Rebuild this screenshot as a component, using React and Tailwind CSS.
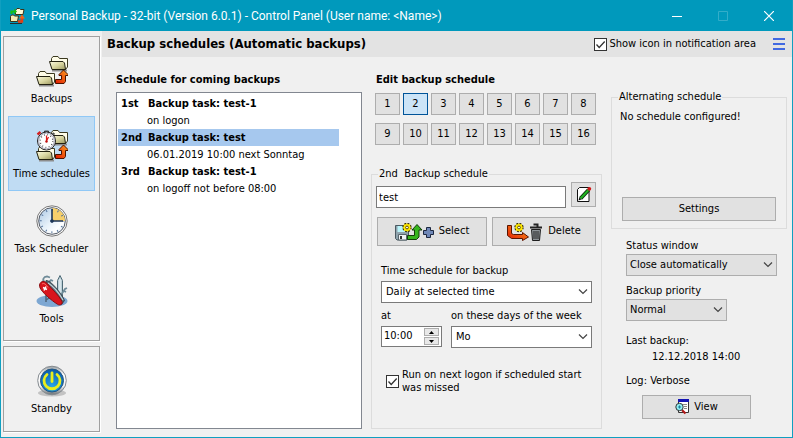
import React from 'react'
import clsx from 'clsx'

const SLOTS = [1, 2, 3, 4, 5, 6, 7, 8, 9, 10, 11, 12, 13, 14, 15, 16]

const SCHEDULES = [
  { nr: '1st', task: 'Backup task: test-1', when: 'on logon' },
  { nr: '2nd', task: 'Backup task: test', when: '06.01.2019 10:00 next Sonntag' },
  { nr: '3rd', task: 'Backup task: test-1', when: 'on logoff not before 08:00' },
]

function Defs() {
  return (
    <svg width="0" height="0" className="absolute" aria-hidden="true">
      <defs>
        <linearGradient id="flap" x1="0" y1="0" x2="1" y2="1">
          <stop offset="0" stopColor="#fbfae0" />
          <stop offset="0.5" stopColor="#d9d6a0" />
          <stop offset="1" stopColor="#9c9860" />
        </linearGradient>
        <linearGradient id="fire" x1="0" y1="1" x2="1" y2="0">
          <stop offset="0" stopColor="#e01800" />
          <stop offset="1" stopColor="#ffa020" />
        </linearGradient>
        <linearGradient id="face" x1="0" y1="0" x2="1" y2="1">
          <stop offset="0" stopColor="#a9c6e3" />
          <stop offset="0.5" stopColor="#e8f2fa" />
          <stop offset="0.75" stopColor="#ffffff" />
          <stop offset="1" stopColor="#bcd3e8" />
        </linearGradient>
        <radialGradient id="power" cx="0.5" cy="0.75" r="0.7">
          <stop offset="0" stopColor="#29a5e8" />
          <stop offset="1" stopColor="#0a5fae" />
        </radialGradient>
        <linearGradient id="rim" x1="0" y1="0" x2="0" y2="1">
          <stop offset="0" stopColor="#9aa0a4" />
          <stop offset="0.3" stopColor="#ffffff" />
          <stop offset="0.7" stopColor="#f2f2f2" />
          <stop offset="1" stopColor="#6a6e72" />
        </linearGradient>
      </defs>
    </svg>
  )
}

function Folder({ x, y }) {
  return (
    <g transform={`translate(${x} ${y})`} strokeWidth="1" strokeLinejoin="round">
      <path d="M3 14.500h15" stroke="#8d8d8d" strokeWidth="2" />
      <path d="M2.500 7V2.500L4 .5h5l1.500 2H18.500V11l-2 2.500z" fill="#fffde8" stroke="#3c3a20" />
      <path d="M.5 5.500h13.500l1.500 1.500 1 6.500H3z" fill="url(#flap)" stroke="#222010" />
    </g>
  )
}

function FireArrow() {
  return <path d="M19.500 24.500h6V20.500h-2.500v-1l4.500-4.500 4.500 4.500v1h-2.500v6l-1.500 2h-8.500z" fill="url(#fire)" stroke="#4a1200" />
}

function BackupsIcon() {
  return (
    <svg width="32" height="32" viewBox="0 0 32 32">
      <Folder x={13} y={1} />
      <Folder x={0} y={16} />
      <FireArrow />
    </svg>
  )
}

function StopwatchIcon() {
  return (
    <svg width="32" height="32" viewBox="0 0 32 32">
      <Folder x={13} y={0} />
      <Folder x={0} y={16} />
      <FireArrow />
      <path d="M8.500 1h4v2h-4z" fill="#777" stroke="#222" strokeWidth="0.800" />
      <path d="M1.500 4.500l3-2.500" stroke="#d42020" strokeWidth="2.400" />
      <path d="M16.500 3l2 1.500" stroke="#555" strokeWidth="2" />
      <circle cx="10.500" cy="11" r="9" fill="#fff" stroke="#222" />
      <circle cx="10.500" cy="11" r="7.800" fill="none" stroke="#aab" strokeWidth="1" />
      <circle cx="10.500" cy="11" r="6.300" fill="none" stroke="#333" strokeWidth="1.200" strokeDasharray="0.800 2.500" />
      <path d="M10.500 12V5.500M10.500 11l2-4" stroke="#e01818" strokeWidth="1.200" />
      <circle cx="10.500" cy="11.500" r="1.200" fill="#c01010" />
    </svg>
  )
}

function ClockIcon() {
  return (
    <svg width="32" height="32" viewBox="0 0 32 32">
      <circle cx="16" cy="16" r="15.200" fill="#fafafa" stroke="#777" />
      <circle cx="16" cy="16" r="13.300" fill="url(#face)" stroke="#555b66" />
      <path d="M16 16V3a13 13 0 0 1 13 13z" fill="#f6cf6b" />
      <circle cx="16" cy="16" r="11.300" fill="none" stroke="#52719a" strokeWidth="2" strokeDasharray="1 4.917" strokeDashoffset="0.500" />
      <path d="M16 17.500V4M14.500 16H27" stroke="#1c3557" strokeWidth="1.600" />
      <circle cx="16" cy="16" r="1.800" fill="#1c3557" />
    </svg>
  )
}

function KnifeIcon() {
  return (
    <svg width="32" height="32" viewBox="0 0 32 32">
      <ellipse cx="16" cy="26" rx="15.500" ry="6" fill="#7da7d2" />
      <path d="M10 20v7M13 23l-3 2" stroke="#4c6478" strokeWidth="1.500" />
      <path d="M21.500 22V5.500L24 .5l2.500 5V23z" fill="#bcd0d8" stroke="#4e6a76" />
      <path d="M24 4v16" stroke="#f4fafc" />
      <path d="M25 20l4-6 2-1M28 16l2 1" fill="none" stroke="#6f8b98" strokeWidth="1.800" />
      <path d="M8.500 7C6 5 7.500 1.500 11 1.500l3 1M12 8l3-3 2 1" fill="none" stroke="#6f8b98" strokeWidth="1.800" />
      <path d="M10 5.500c4-1 15 12 18.500 20l-3 4L9 13z" fill="#546a74" stroke="#2c3b42" strokeWidth="0.800" />
      <path d="M12 8c5 3 11 10 15 17" fill="none" stroke="#c4d4da" strokeWidth="1.200" />
      <path d="M4 8.500C6 5 10 6.500 12.500 10c4 4.500 10.500 10.500 13.500 16.500 1 2.500-2 4.500-4.500 2.800C15 25 8 19 5 14.500 3.700 12.500 3 10.500 4 8.500z" fill="#d8141c" stroke="#8b0c10" />
      <path d="M6 9c2-1.500 4 .5 6 3.500" fill="none" stroke="#ff7a70" />
      <path d="M7 12.500l4 2M10 11.500l-2 4" stroke="#fff" strokeWidth="1.500" />
    </svg>
  )
}

function PowerIcon() {
  return (
    <svg width="32" height="32" viewBox="0 0 32 32">
      <ellipse cx="16" cy="28" rx="14" ry="3.500" fill="#c3c3c3" />
      <circle cx="16" cy="15.500" r="14.300" fill="url(#rim)" stroke="#858b90" />
      <circle cx="16" cy="15.500" r="11.500" fill="url(#power)" stroke="#24567f" />
      <path d="M11 9.500a8 8 0 1 0 10 0" fill="none" stroke="#e9ee1c" strokeWidth="2.800" strokeLinecap="round" />
      <path d="M16 8v8.500" stroke="#e9ee1c" strokeWidth="2.800" strokeLinecap="round" />
    </svg>
  )
}

function AppIcon() {
  return (
    <svg width="16" height="16" viewBox="0 0 16 16">
      <path d="M6.500 6.500v-4l1.500-2h2.500l1 1h3.500l-1 5z" fill="#fffbd6" stroke="#3a3418" />
      <path d="M1.500 13.500V8.500l1-1.500h2l1 1H9.500l-1 5.500z" fill="#f3ecb4" stroke="#3a3418" />
      <path d="M2.500 6V3.500h3" fill="none" stroke="#16c016" strokeWidth="2.200" />
      <path d="M5 .5l3 3L5 6.500z" fill="#16c016" />
      <path d="M9 13.500h4V10" fill="none" stroke="#e83c10" strokeWidth="2.400" />
      <path d="M10 10.500l3-4 3 4z" fill="#f06418" />
      <path d="M1 15.500h12" stroke="#2b2b2b" />
    </svg>
  )
}

function Gear({ x, y }) {
  return (
    <g transform={`translate(${x} ${y})`}>
      <circle r="3.900" fill="#ffe800" stroke="#302800" strokeWidth="1.600" strokeDasharray="1.800 1.263" />
      <circle r="3.600" fill="#ffe800" />
      <circle r="1.400" fill="#fff" stroke="#5a4c00" strokeWidth="1" />
    </g>
  )
}

function SelectTaskIcon() {
  return (
    <svg width="40" height="18" viewBox="0 0 40 18">
      <path d="M.5 2.500h13v13l-1.500 1.500H2L.5 15.500z" fill="#8fa3ad" stroke="#4b5a62" />
      <path d="M2.500 3h9v6h-9z" fill="#b9f4fa" />
      <path d="M3.500 11.500h8V17h-8z" fill="#eef2f4" stroke="#59666d" />
      <path d="M5 13h2v3H5z" fill="#333" />
      <path d="M12.500 12.500h7V7H17l5-5.500L27 7h-3v7l-2.500 2.500h-9z" fill="#35b51c" stroke="#123c08" />
      <Gear x={12} y={4.5} />
      <path d="M31.500 4.500h4v3h3v4h-3v3h-4v-3h-3v-4h3z" fill="#7088b8" stroke="#1c2740" />
    </svg>
  )
}

function DeleteTaskIcon() {
  return (
    <svg width="36" height="18" viewBox="0 0 36 18">
      <path d="M.5 2.500h4v8l2 1h9V9.500l6 4.500-6 3.500v-2H4.500l-4-3z" fill="url(#fire)" stroke="#5a1400" />
      <Gear x={12} y={4.5} />
      <path d="M26.500 1.500h4v2M23 4.500h12" fill="none" stroke="#222" strokeWidth="2" />
      <path d="M24.500 6.500h9l-1 11h-7z" fill="#8e9499" stroke="#1e1e1e" />
      <path d="M27 8v8M29 8v8M31 8v8" stroke="#222" />
    </svg>
  )
}

function EditIcon() {
  return (
    <svg width="16" height="17" viewBox="0 0 16 17">
      <path d="M1.500 3.500l2-2h9.500v14H1.500z" fill="#fff" stroke="#111" />
      <path d="M4.500 12.500L12.500 4" stroke="#0b2f0b" strokeWidth="4" />
      <path d="M4.500 12.500L12.500 4" stroke="#22b422" strokeWidth="2" />
      <path d="M2.500 14.500l.8-3 2 2z" fill="#111" />
      <circle cx="13.300" cy="2.800" r="1.900" fill="#d01818" />
    </svg>
  )
}

function ViewIcon() {
  return (
    <svg width="15" height="16" viewBox="0 0 15 16">
      <path d="M3.500.5h10v13h-10z" fill="#fff" stroke="#333" />
      <path d="M3 0h11v3H3z" fill="#1414b4" />
      <path d="M8 5.500h4M9 7.500h3M9 9.500h3" stroke="#888" />
      <path d="M7 11l3.500 3.500" stroke="#b01818" strokeWidth="2.200" />
      <circle cx="4.500" cy="8" r="3.700" fill="#8ff0f4" stroke="#333" />
      <path d="M3 8h3M4.500 6.500v3" stroke="#1a7a9a" />
    </svg>
  )
}

function Chevron() {
  return (
    <svg width="10" height="6" viewBox="0 0 10 6" className="pointer-events-none absolute right-1 top-1/2 -translate-y-1/2">
      <path d="M1 .5l4 4 4-4" fill="none" stroke="#444" strokeWidth="1.200" />
    </svg>
  )
}

function Dropdown({ id, options, className, grey }) {
  return (
    <div className={clsx('relative', className)}>
      <select
        id={id}
        className={clsx(
          'block h-[22px] w-full appearance-none rounded-none border outline-none',
          grey ? 'border-[#adadad] bg-[#e1e1e1] pl-[3px]' : 'border-[#7a7a7a] bg-white pl-1'
        )}
      >
        {options.map((o) => (
          <option key={o}>{o}</option>
        ))}
      </select>
      <Chevron />
    </div>
  )
}

function Checkbox({ id }) {
  return (
    <span className="relative block size-[13px] shrink-0">
      <input id={id} type="checkbox" defaultChecked className="block size-[13px] appearance-none border border-[#333] bg-white" />
      <svg width="13" height="13" viewBox="0 0 13 13" className="pointer-events-none absolute inset-0">
        <path d="M2.500 6.500l2.700 3 5.500-6" fill="none" stroke="#333" strokeWidth="1.300" />
      </svg>
    </span>
  )
}

function PushButton({ className, children, ...rest }) {
  return (
    <button type="button" className={clsx('flex items-center justify-center border border-[#adadad] bg-[#e1e1e1]', className)} {...rest}>
      {children}
    </button>
  )
}

function NavButton({ icon, label, active, className }) {
  return (
    <button
      type="button"
      className={clsx(
        'flex w-full flex-col items-center border pt-[13px] whitespace-nowrap',
        active ? 'border-[#90c8f6] bg-[#c0dcf3]' : 'border-transparent',
        className
      )}
    >
      {icon}
      <span className="mt-1 leading-4">{label}</span>
    </button>
  )
}

function TitleBar() {
  return (
    <header className="flex h-[31px] items-center bg-[#0099bc] pl-2 text-white">
      <AppIcon />
      <h1 className="ml-[6px] flex-1 font-['Roboto','Noto_Sans',sans-serif] text-[12px]">
        Personal Backup - 32-bit (Version 6.0.1) - Control Panel (User name: &lt;Name&gt;)
      </h1>
      <button type="button" aria-label="Minimize" className="flex h-full w-[46px] items-center justify-center">
        <svg width="10" height="10" viewBox="0 0 10 10"><path d="M0 5.500h10" stroke="#fff" /></svg>
      </button>
      <button type="button" aria-label="Maximize" disabled className="flex h-full w-[46px] items-center justify-center">
        <svg width="10" height="10" viewBox="0 0 10 10"><path d="M.5.5h9v9h-9z" fill="none" stroke="#33adc9" /></svg>
      </button>
      <button type="button" aria-label="Close" className="flex h-full w-[46px] items-center justify-center">
        <svg width="10" height="10" viewBox="0 0 10 10"><path d="M0 0l10 10M10 0L0 10" stroke="#fff" strokeWidth="1.200" /></svg>
      </button>
    </header>
  )
}

function Sidebar() {
  return (
    <nav className="flex w-[97px] shrink-0 flex-col gap-[5px] pt-[5px] pb-[5px]">
      <div className="flex-1 border border-[#a0a0a0] px-1 pt-1 shadow-[1px_1px_0_#fff]">
        <NavButton icon={<BackupsIcon />} label="Backups" className="h-[75px]" />
        <NavButton icon={<StopwatchIcon />} label="Time schedules" className="h-[75px]" active />
        <NavButton icon={<ClockIcon />} label="Task Scheduler" className="h-[70px]" />
        <NavButton icon={<KnifeIcon />} label="Tools" className="h-[75px]" />
      </div>
      <div className="h-[86px] border border-[#a0a0a0] px-1 pt-1 shadow-[1px_1px_0_#fff]">
        <NavButton icon={<PowerIcon />} label="Standby" className="h-[75px]" />
      </div>
    </nav>
  )
}

function ScheduleList() {
  return (
    <section className="flex min-w-0 flex-1 flex-col">
      <h3 className="h-[20px] text-[11px] leading-4 font-bold">Schedule for coming backups</h3>
      <div className="flex-1 border border-[#828790] bg-white py-0.5 pl-px">
        {SCHEDULES.map((s, i) => (
          <div key={s.nr} className="leading-[17px]">
            <div className={clsx('mr-[22px] flex pl-[3px] font-bold', i === 1 && 'bg-[#a6c8ee]')}>
              <span className="w-[27px]">{s.nr}</span>
              <span>{s.task}</span>
            </div>
            <div className="pl-[29px]">{s.when}</div>
          </div>
        ))}
      </div>
    </section>
  )
}

function EditSchedule() {
  const [slot, setSlot] = React.useState(2)

  return (
    <section className="flex w-[231px] shrink-0 flex-col">
      <h3 className="h-[21px] pl-[5px] text-[11px] leading-4 font-bold">Edit backup schedule</h3>
      <div className="grid grid-cols-8 gap-x-[3px] gap-y-2 pr-[6px] pl-1">
        {SLOTS.map((n) => (
          <button
            key={n}
            type="button"
            onClick={() => setSlot(n)}
            className={clsx('h-[22px] border', n === slot ? 'border-[#005499] bg-[#cce4f7]' : 'border-[#adadad] bg-[#e1e1e1]')}
          >
            {n}
          </button>
        ))}
      </div>

      <fieldset className="mt-[21px] flex-1 border border-[#dcdcdc] pr-[5px] pl-1">
        <legend className="ml-[2px] px-px leading-4 whitespace-pre">2nd  Backup schedule</legend>
        <div className="flex items-end gap-[5px]">
          <input aria-label="Backup task" defaultValue="test" className="h-[22px] min-w-0 flex-1 border border-[#7a7a7a] bg-white px-[2px] outline-none" />
          <PushButton className="mb-px size-[25px]" aria-label="Edit task">
            <EditIcon />
          </PushButton>
        </div>
        <div className="mt-[9px] flex gap-[5px] pl-px">
          <PushButton className="h-[29px] w-[110px] gap-1"><SelectTaskIcon />Select</PushButton>
          <PushButton className="h-[29px] flex-1 gap-[5px]"><DeleteTaskIcon />Delete</PushButton>
        </div>

        <div className="mt-[17px] pr-1 pl-[5px]">
          <label htmlFor="mode" className="block h-[18px] leading-4">Time schedule for backup</label>
          <Dropdown id="mode" options={['Daily at selected time']} />
          <div className="mt-[5px] flex gap-[9px]">
            <div className="w-[61px]">
              <label htmlFor="time" className="block h-[18px] leading-4">at</label>
              <div className="flex h-[21px] items-center border border-[#7a7a7a] bg-white pr-[2px]">
                <input id="time" defaultValue="10:00" className="min-w-0 flex-1 pl-[2px] outline-none" />
                <span className="flex w-[15px] flex-col gap-px">
                  <button type="button" aria-label="Later" className="flex h-2 items-center justify-center border border-[#adadad] bg-[#e8e8e8]">
                    <svg width="5" height="3" viewBox="0 0 5 3"><path d="M0 3l2.500-3L5 3z" /></svg>
                  </button>
                  <button type="button" aria-label="Earlier" className="flex h-2 items-center justify-center border border-[#adadad] bg-[#e8e8e8]">
                    <svg width="5" height="3" viewBox="0 0 5 3"><path d="M0 0l2.500 3L5 0z" /></svg>
                  </button>
                </span>
              </div>
            </div>
            <div className="flex-1">
              <label htmlFor="days" className="block h-[18px] leading-4">on these days of the week</label>
              <Dropdown id="days" options={['Mo', 'Tu', 'We', 'Th', 'Fr', 'Sa', 'Su']} />
            </div>
          </div>
        </div>

        <div className="mt-5 flex items-center gap-[3px] pl-[10px]">
          <Checkbox id="missed" />
          <label htmlFor="missed" className="leading-[13px]">Run on next logon if scheduled start<br />was missed</label>
        </div>
      </fieldset>
    </section>
  )
}

function Options() {
  return (
    <section className="w-[176px] shrink-0 pt-[17px]">
      <fieldset className="h-[140px] border border-[#dcdcdc] px-[10px]">
        <legend className="-ml-1 px-px leading-4">Alternating schedule</legend>
        <div className="flex h-[116px] flex-col justify-between">
          <p className="mt-1 -ml-[2px] leading-4">No schedule configured!</p>
          <PushButton className="h-6 w-full">Settings</PushButton>
        </div>
      </fieldset>
      <div className="pt-[9px] pr-[10px] pl-[15px]">
        <label htmlFor="status" className="block h-4 leading-4">Status window</label>
        <Dropdown id="status" grey options={['Close automatically']} />
        <label htmlFor="priority" className="mt-[7px] block h-4 leading-4">Backup priority</label>
        <Dropdown id="priority" grey className="w-[101px]" options={['Normal', 'Low', 'High']} />
        <p className="mt-3 leading-4">Last backup:</p>
        <p className="pl-[26px] leading-4">12.12.2018 14:00</p>
        <p className="mt-2 leading-4">Log: Verbose</p>
        <PushButton className="mt-[6px] ml-4 h-6 w-[109px] gap-1"><ViewIcon />View</PushButton>
      </div>
    </section>
  )
}

export default function App() {
  return (
    <div className="flex min-h-screen flex-col border border-t-0 border-[#109fc0] bg-[#f0f0f0] font-['DejaVu_Sans_Condensed','Noto_Sans',sans-serif] text-[11px] text-black">
      <Defs />
      <TitleBar />
      <div className="flex flex-1 gap-[2px] pl-[2px]">
        <Sidebar />
        <main className="flex min-w-0 flex-1 flex-col">
          <div className="flex h-[26px] items-center bg-[#e3e3e3] pr-[7px] pl-[5px]">
            <h2 className="flex-1 text-[13px] font-bold">Backup schedules (Automatic backups)</h2>
            <Checkbox id="tray" />
            <label htmlFor="tray" className="ml-[2px]">Show icon in notification area</label>
            <button type="button" aria-label="Menu" className="ml-[17px]">
              <svg width="12" height="12" viewBox="0 0 12 12"><path d="M0 1h12M0 6h12M0 11h12" stroke="#4169e1" strokeWidth="2" /></svg>
            </button>
          </div>
          <div className="flex flex-1 gap-[9px] pt-[15px] pr-[5px] pb-2 pl-[14px]">
            <ScheduleList />
            <EditSchedule />
            <Options />
          </div>
        </main>
      </div>
    </div>
  )
}
